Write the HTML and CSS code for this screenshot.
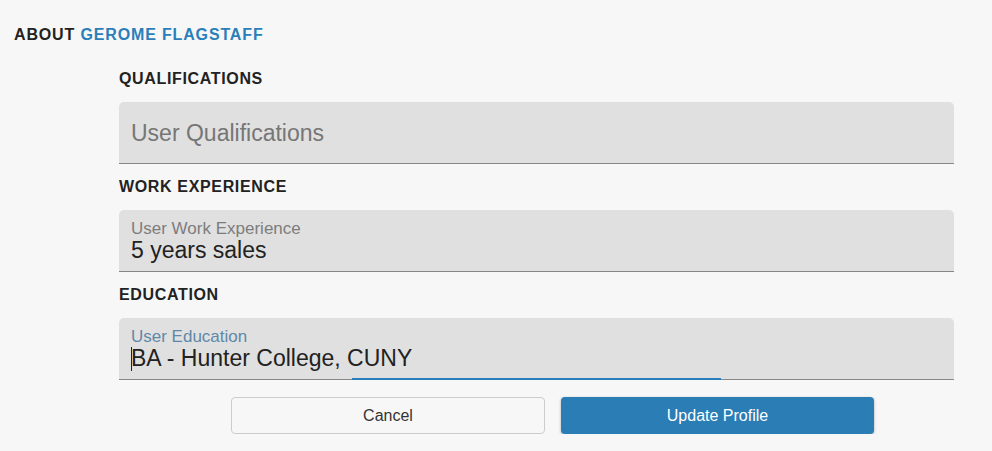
FILE: index.html
```html
<!DOCTYPE html>
<html>
<head>
<meta charset="utf-8">
<link rel="stylesheet" href="styles.css">
</head>
<body>
<div class="page">
  <h1 class="title">About <span class="name">Gerome Flagstaff</span></h1>
  <div class="form">
    <h2 class="section">Qualifications</h2>
    <div class="field empty">
      <div class="placeholder">User Qualifications</div>
    </div>
    <h2 class="section">Work Experience</h2>
    <div class="field">
      <div class="label">User Work Experience</div>
      <div class="value">5 years sales</div>
    </div>
    <h2 class="section">Education</h2>
    <div class="field focused">
      <div class="label">User Education</div>
      <div class="value"><span class="caret"></span>BA - Hunter College, CUNY</div>
      <div class="ripple"></div>
    </div>
    <div class="actions">
      <button class="btn cancel">Cancel</button>
      <button class="btn primary">Update Profile</button>
    </div>
  </div>
</div>
</body>
</html>
```
FILE: styles.css
```css
html, body {
  margin: 0;
  padding: 0;
  background: #f7f7f7;
  font-family: "Liberation Sans", Arial, sans-serif;
  color: #222;
}
.page {
  padding: 24px 14px 0 14px;
}
.title {
  margin: 0;
  font-size: 16px;
  font-weight: bold;
  text-transform: uppercase;
  letter-spacing: 0.85px;
  line-height: 22px;
  color: #222;
}
.name {
  color: #2a7fba;
}
.form {
  margin-left: 105px;
  width: 835px;
  padding-top: 22px;
}
.section {
  margin: 0;
  font-size: 16px;
  font-weight: bold;
  text-transform: uppercase;
  letter-spacing: 0.65px;
  line-height: 22px;
  padding: 0 0 12px 0;
  color: #222;
}
.field {
  position: relative;
  background: #e0e0e0;
  border-radius: 5px 5px 0 0;
  border-bottom: 1px solid #888;
  padding: 10px 12px 0 12px;
  margin-bottom: 12px;
  box-sizing: border-box;
  height: 62px;
}
.field.empty {
  padding-top: 0;
  display: flex;
  align-items: center;
}
.placeholder {
  font-size: 23px;
  color: #767676;
  line-height: 27px;
  margin-top: 1px;
}
.label {
  font-size: 17px;
  color: #7d7d7d;
  line-height: 17px;
}
.focused .label {
  color: #5f88a8;
}
.value {
  font-size: 23px;
  color: #222;
  line-height: 26px;
  white-space: nowrap;
}
.caret {
  display: inline-block;
  width: 1px;
  height: 24px;
  background: #222;
  vertical-align: -5px;
  margin-right: -1px;
}
.ripple {
  position: absolute;
  left: 233px;
  width: 369px;
  bottom: -1px;
  height: 2px;
  background: #2a7fba;
}
.actions {
  display: flex;
  gap: 16px;
  margin-left: 112px;
  margin-top: 17px;
}
.btn {
  height: 37px;
  font-family: "Liberation Sans", Arial, sans-serif;
  font-size: 16px;
  border-radius: 4px;
  cursor: pointer;
  padding: 0;
}
.cancel {
  width: 314px;
  background: #f7f7f7;
  border: 1px solid #cccccc;
  color: #333;
}
.primary {
  width: 313px;
  background: #2a7db5;
  border: none;
  color: #fff;
  box-shadow: 0 1px 3px rgba(0,0,0,0.3);
}
```
